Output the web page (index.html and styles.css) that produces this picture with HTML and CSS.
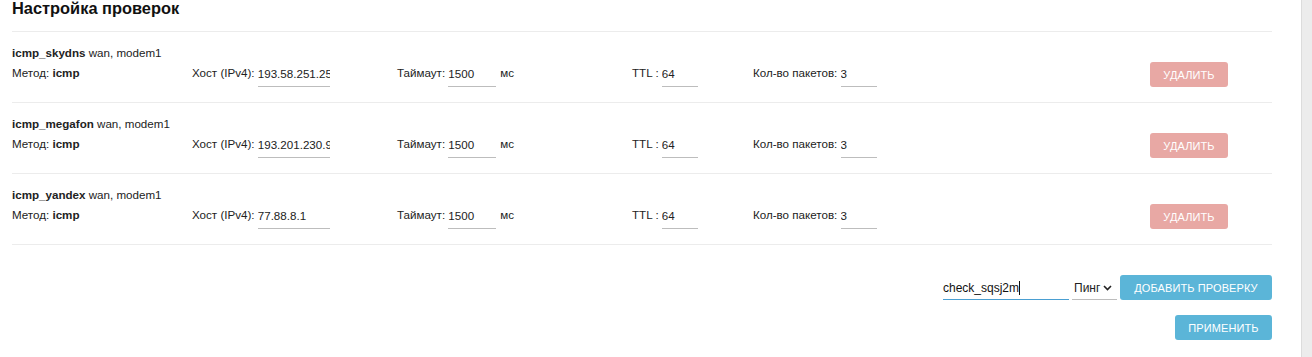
FILE: index.html
```html
<!DOCTYPE html>
<html lang="ru">
<head>
<meta charset="utf-8">
<title>Настройка проверок</title>
<link rel="stylesheet" href="styles.css">
</head>
<body>
<div class="page">
  <main class="main">
    <h1 class="title">Настройка проверок</h1>
    <div class="list">
      <div class="row">
        <div class="name"><b>icmp_skydns</b> wan, modem1</div>
        <div class="fields">
          <div class="cell">Метод: <b>icmp</b></div>
          <div class="cell">Хост (IPv4): <input class="field w-host" value="193.58.251.251"></div>
          <div class="cell">Таймаут: <input class="field w-time" value="1500"><span class="unit">мс</span></div>
          <div class="cell">TTL : <input class="field w-small" value="64"></div>
          <div class="cell">Кол-во пакетов: <input class="field w-small" value="3"></div>
          <div class="cell cell-btn"><button class="btn btn-del">УДАЛИТЬ</button></div>
        </div>
      </div>
      <div class="row">
        <div class="name"><b>icmp_megafon</b> wan, modem1</div>
        <div class="fields">
          <div class="cell">Метод: <b>icmp</b></div>
          <div class="cell">Хост (IPv4): <input class="field w-host" value="193.201.230.9"></div>
          <div class="cell">Таймаут: <input class="field w-time" value="1500"><span class="unit">мс</span></div>
          <div class="cell">TTL : <input class="field w-small" value="64"></div>
          <div class="cell">Кол-во пакетов: <input class="field w-small" value="3"></div>
          <div class="cell cell-btn"><button class="btn btn-del">УДАЛИТЬ</button></div>
        </div>
      </div>
      <div class="row">
        <div class="name"><b>icmp_yandex</b> wan, modem1</div>
        <div class="fields">
          <div class="cell">Метод: <b>icmp</b></div>
          <div class="cell">Хост (IPv4): <input class="field w-host" value="77.88.8.1"></div>
          <div class="cell">Таймаут: <input class="field w-time" value="1500"><span class="unit">мс</span></div>
          <div class="cell">TTL : <input class="field w-small" value="64"></div>
          <div class="cell">Кол-во пакетов: <input class="field w-small" value="3"></div>
          <div class="cell cell-btn"><button class="btn btn-del">УДАЛИТЬ</button></div>
        </div>
      </div>
    </div>
    <div class="actions">
      <div class="add-row">
        <div class="new-name"><span>check_sqsj2m</span><span class="caret"></span></div>
        <div class="select">Пинг<svg class="chev" width="9" height="6" viewBox="0 0 9 6"><path d="M1 1 L4.5 4.5 L8 1" fill="none" stroke="#222" stroke-width="1.6"/></svg></div>
        <button class="btn btn-blue btn-add">ДОБАВИТЬ ПРОВЕРКУ</button>
      </div>
      <div class="apply-row">
        <button class="btn btn-blue btn-apply">ПРИМЕНИТЬ</button>
      </div>
    </div>
  </main>
  <div class="scrollbar"></div>
</div>
</body>
</html>
```

FILE: styles.css
```css
html, body {
  margin: 0;
  padding: 0;
  background: #fff;
}
body {
  font-family: "Liberation Sans", Arial, sans-serif;
  font-size: 11.6px;
  color: #222;
}
.page {
  display: flex;
  height: 357px;
  overflow: hidden;
}
.main {
  flex: 1;
  padding: 0 29px 0 12px;
}
.scrollbar {
  width: 10px;
  background: #ececec;
  border-left: 1px solid #dcdcdc;
}
.title {
  margin: 0;
  font-size: 16.4px;
  line-height: 16px;
  font-weight: bold;
  color: #111;
  padding-top: 0;
  padding-bottom: 15px;
  border-bottom: 1px solid #ececec;
}
.row {
  padding: 14px 0 15px;
  border-bottom: 1px solid #ececec;
}
.name {
  line-height: 14px;
  margin-bottom: 2px;
}
.fields {
  display: grid;
  grid-template-columns: 180px 205px 235px 121px 397px 78px;
  align-items: end;
  height: 25px;
}
.cell {
  display: flex;
  align-items: flex-start;
  height: 21px;
  line-height: 14px;
  white-space: pre;
}
.cell-btn {
  height: 25px;
}
.field {
  font-family: inherit;
  font-size: 11.6px;
  line-height: 14px;
  color: #222;
  border: none;
  border-bottom: 1px solid #bdbdbd;
  padding: 0 0 6px;
  margin: 0;
  height: 21px;
  box-sizing: border-box;
  background: transparent;
  outline: none;
}
.w-host { width: 72px; }
.w-time { width: 48px; }
.w-small { width: 36px; }
.unit {
  margin-left: 4px;
}
.btn {
  font-family: inherit;
  font-size: 11px;
  color: #fff;
  border: none;
  border-radius: 3px;
  height: 25px;
  padding: 0;
  cursor: pointer;
  letter-spacing: 0.1px;
}
.btn-del {
  width: 78px;
  background: #e8a8a4;
}
.btn-blue {
  background: #5bb5d8;
}
.actions {
  display: flex;
  flex-direction: column;
  align-items: flex-end;
  padding-top: 30px;
  gap: 15px;
}
.add-row {
  display: flex;
  align-items: flex-end;
  gap: 3px;
}
.new-name {
  width: 126px;
  height: 24px;
  box-sizing: border-box;
  border-bottom: 1px solid #4a9fd2;
  font-size: 12px;
  line-height: 14px;
  padding-top: 5px;
  display: flex;
  align-items: flex-start;
  color: #111;
}
.caret {
  width: 1px;
  height: 14px;
  background: #111;
}
.select {
  width: 45px;
  height: 24px;
  box-sizing: border-box;
  border-bottom: 1px solid #bdbdbd;
  font-size: 12px;
  line-height: 14px;
  padding: 5px 0 0 2px;
  display: flex;
  align-items: flex-start;
  gap: 3px;
  color: #222;
}
.chev {
  margin-top: 4px;
}
.btn-add {
  width: 152px;
}
.btn-apply {
  width: 97px;
}
```
